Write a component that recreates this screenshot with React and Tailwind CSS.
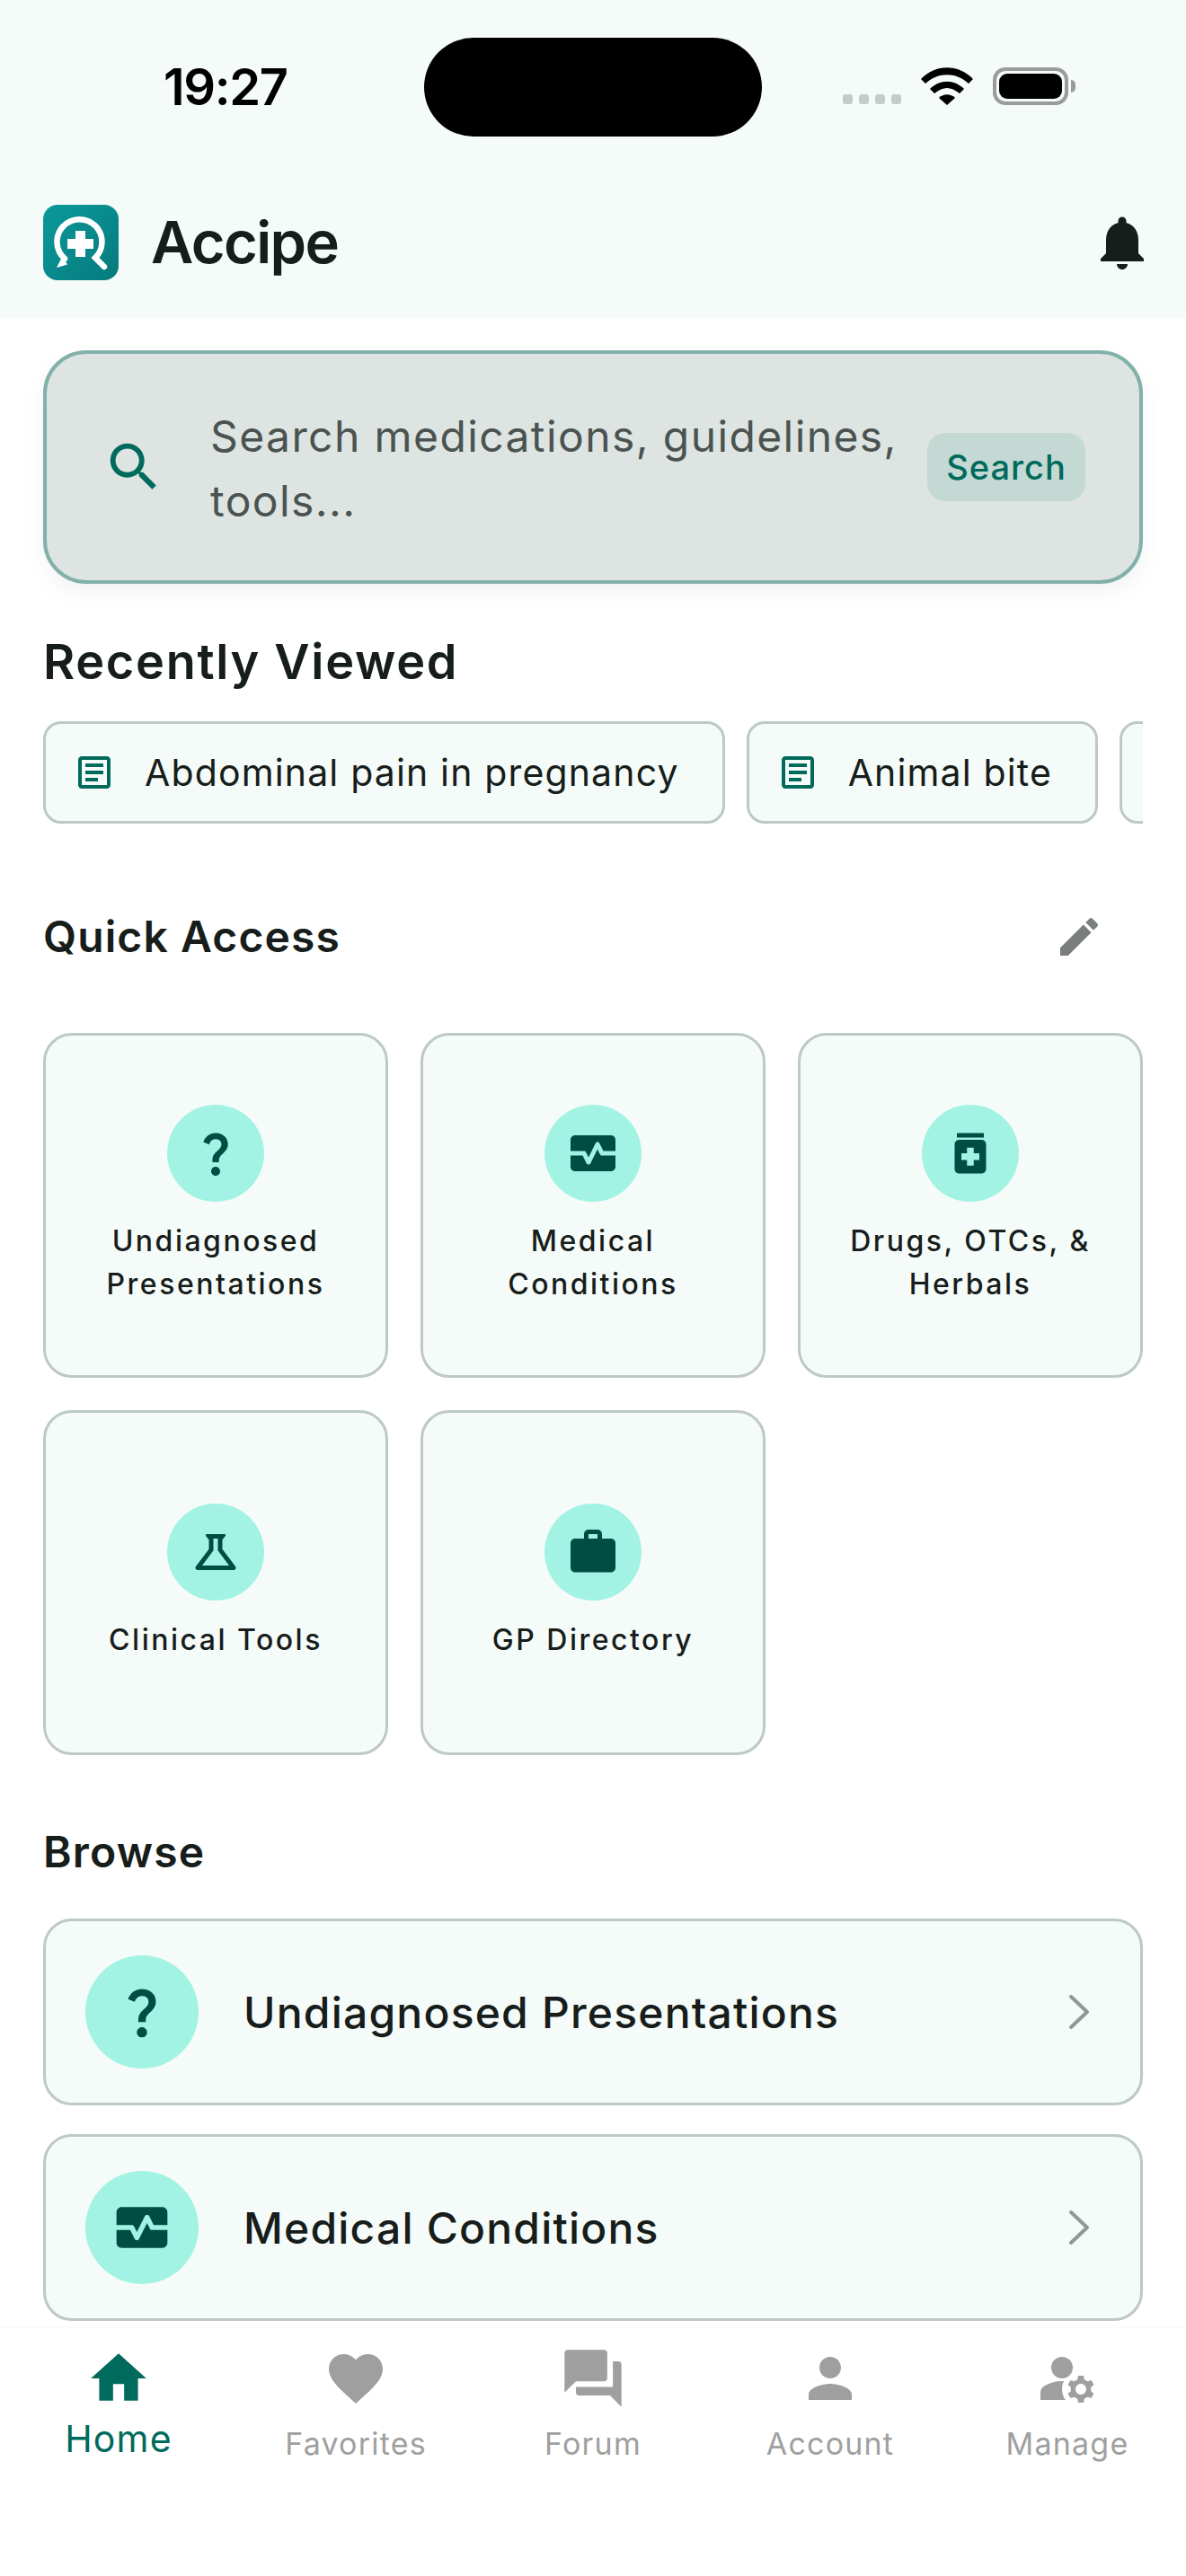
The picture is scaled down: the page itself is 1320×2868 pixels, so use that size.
const sans = "font-['Inter','Noto_Sans',sans-serif]";

const QuestionIcon = ({ className }) => (
  <svg viewBox="0 0 24 24" className={className} fill="currentColor">
    <path d="M11.07 12.85c.77-1.39 2.25-2.21 3.11-3.44.91-1.29.4-3.7-2.18-3.7-1.69 0-2.52 1.28-2.87 2.34L6.54 6.96C7.25 4.83 9.18 3 11.99 3c2.35 0 3.96 1.07 4.78 2.41.7 1.15 1.11 3.3.03 4.9-1.2 1.77-2.35 2.31-2.97 3.45-.25.46-.35.76-.35 2.24h-2.89c-.01-.78-.13-2.05.48-3.15zM14 20c0 1.1-.9 2-2 2s-2-.9-2-2 .9-2 2-2 2 .9 2 2z" />
  </svg>
);

const MonitorHeartIcon = ({ className }) => (
  <svg viewBox="0 0 24 24" className={className} fill="currentColor">
    <path d="M15.11 12.45 14 10.24l-3.11 6.21c-.16.34-.51.55-.89.55s-.73-.21-.89-.55L7.38 13H2v5c0 1.1.9 2 2 2h16c1.1 0 2-.9 2-2v-5h-6c-.38 0-.73-.21-.89-.55z" />
    <path d="M20 4H4c-1.1 0-2 .9-2 2v5h6c.38 0 .73.21.89.55L10 13.76l3.11-6.21c.34-.68 1.45-.68 1.79 0L16.62 11H22V6c0-1.1-.9-2-2-2z" />
  </svg>
);

const MedicationIcon = ({ className }) => (
  <svg viewBox="0 0 24 24" className={className} fill="currentColor">
    <path d="M6 3h12v2H6zm11 3H7c-1.1 0-2 .9-2 2v11c0 1.1.9 2 2 2h10c1.1 0 2-.9 2-2V8c0-1.1-.9-2-2-2zm-1 9h-2.5v2.5h-3V15H8v-3h2.5V9.5h3V12H16v3z" />
  </svg>
);

const ScienceIcon = ({ className }) => (
  <svg viewBox="0 0 24 24" className={className} fill="currentColor">
    <path d="M13 11.33 18 18H6l5-6.67V6h2m2.96-2H8.04c-.42 0-.65.48-.39.81L9 6.5v4.17L3.2 18.4c-.49.66-.02 1.6.8 1.6h16c.82 0 1.29-.94.8-1.6L15 10.67V6.5l1.35-1.69c.26-.33.03-.81-.39-.81z" />
  </svg>
);

const WorkIcon = ({ className }) => (
  <svg viewBox="0 0 24 24" className={className} fill="currentColor">
    <path d="M20 6h-4V4c0-1.11-.89-2-2-2h-4c-1.11 0-2 .89-2 2v2H4c-1.11 0-1.99.89-1.99 2L2 19c0 1.11.89 2 2 2h16c1.11 0 2-.89 2-2V8c0-1.11-.89-2-2-2zm-6 0h-4V4h4v2z" />
  </svg>
);

const ArticleIcon = ({ className }) => (
  <svg viewBox="0 0 24 24" className={className} fill="currentColor">
    <path d="M19 5v14H5V5h14m0-2H5c-1.1 0-2 .9-2 2v14c0 1.1.9 2 2 2h14c1.1 0 2-.9 2-2V5c0-1.1-.9-2-2-2z" />
    <path d="M14 17H7v-2h7v2zm3-4H7v-2h10v2zm0-4H7V7h10v2z" />
  </svg>
);

const Logo = () => (
  <svg viewBox="0 0 84 84" className="w-[84px] h-[84px] shrink-0">
    <defs>
      <linearGradient id="logoFill" x1="0" y1="0" x2="1" y2="1">
        <stop offset="0" stopColor="#0b9a9c" />
        <stop offset="1" stopColor="#067a7c" />
      </linearGradient>
    </defs>
    <rect width="84" height="84" rx="16" fill="url(#logoFill)" />
    <path d="M24 60 A 25 25 0 1 1 58 59 L68 69" fill="none" stroke="#fff" strokeWidth="6.5" strokeLinecap="round" />
    <path d="M15 70 L27 66.5 L21.5 57 Z" fill="#fff" />
    <path d="M36 29h11v9h9v11h-9v9H36v-9h-9V38h9z" fill="#fff" />
  </svg>
);

const StatusBar = () => (
  <div className="flex items-center h-[190px] pt-[4px] relative">
    <span className="ml-[182px] text-[56px] font-semibold text-black leading-none tracking-tight font-['Inter',sans-serif]">19:27</span>
    <div className="absolute left-[472px] top-[42px] w-[376px] h-[110px] bg-black rounded-full" />
    <div className="absolute left-[938px] top-[105px] flex gap-[7px]">
      {[0, 1, 2, 3].map((i) => (
        <div key={i} className="w-[11px] h-[11px] rounded-[3px] bg-[#c4cbc8]" />
      ))}
    </div>
    <svg viewBox="0 0 58 42" className="absolute left-[1025px] top-[75px] w-[58px] h-[42px]" fill="#000">
      <path d="M0 13 C 16 -4 42 -4 58 13 L53 18 C 39 5 19 5 5 18 Z" />
      <path d="M10 24 C 21 13 37 13 48 24 L43 29 C 33 21 25 21 15 29 Z" />
      <path d="M20 34 C 25 29 33 29 38 34 L29 42 Z" />
    </svg>
    <div className="absolute left-[1105px] top-[75px] w-[84px] h-[42px] rounded-[14px] border-[4px] border-[#999c9b] p-[3px]">
      <div className="w-full h-full bg-black rounded-[9px]" />
    </div>
    <div className="absolute left-[1192px] top-[89px] w-[5px] h-[14px] rounded-r-full bg-[#999c9b]" />
  </div>
);

const IconCircle = ({ children, size = "w-[108px] h-[108px]" }) => (
  <div className={`${size} rounded-full bg-[#a2f3e3] flex items-center justify-center shrink-0 text-[#004d43]`}>
    {children}
  </div>
);

const Chip = ({ label }) => (
  <div className="h-[114px] shrink-0 flex items-center gap-[32px] pl-[30px] pr-[48px] rounded-[20px] border-[3px] border-[#bdc9c5] bg-[#f5fbf8]">
    <ArticleIcon className="w-[48px] h-[48px] text-[#006a5d] shrink-0" />
    <span className="pt-[2px] text-[41px] text-[#171d1b] whitespace-nowrap tracking-[1.15px]">{label}</span>
  </div>
);

const QuickCard = ({ icon, label }) => (
  <div className="h-[384px] rounded-[32px] border-[3px] border-[#bdc9c5] bg-[#f5fbf8] flex flex-col items-center justify-center px-[30px]">
    <IconCircle>{icon}</IconCircle>
    <span className="mt-[20px] text-center text-[32px] leading-[48px] font-medium text-[#171d1b] tracking-[2.5px]">{label}</span>
  </div>
);

const BrowseRow = ({ icon, label }) => (
  <div className="h-[208px] rounded-[32px] border-[3px] border-[#bdc9c5] bg-[#f5fbf8] flex items-center pl-[44px] pr-[56px]">
    <IconCircle size="w-[126px] h-[126px]">{icon}</IconCircle>
    <span className="ml-[50px] flex-1 pt-[2px] text-[48px] font-medium text-[#171d1b] tracking-[1.2px]">{label}</span>
    <svg viewBox="0 0 24 40" className="w-[24px] h-[40px] text-[#8d9995]" fill="none" stroke="currentColor" strokeWidth="4" strokeLinecap="round" strokeLinejoin="round">
      <path d="M3 3 L21 20 L3 37" />
    </svg>
  </div>
);

const Tab = ({ icon, label, active }) => (
  <div className={`flex-1 flex flex-col items-center ${active ? "text-[#006a5d]" : "text-[#9f9f9f]"}`}>
    <div className="h-[78px] flex items-center justify-center">{icon}</div>
    <span className={`${active ? "mt-[6px] text-[41px]" : "mt-[12px] text-[34px]"} leading-[44px] tracking-[1.2px]`}>{label}</span>
  </div>
);

export default function App() {
  return (
    <div className={`w-[1320px] h-[2868px] bg-white flex flex-col overflow-hidden ${sans}`}>
      <header className="bg-[#f5fbf8] h-[354px] shrink-0">
        <StatusBar />
        <div className="flex items-center justify-between pl-[48px] pr-[35px] h-[84px] mt-[38px]">
          <div className="flex items-center gap-[36px]">
            <Logo />
            <span className="text-[65px] font-semibold text-[#171d1b] tracking-tight">Accipe</span>
          </div>
          <svg viewBox="0 0 24 24" className="w-[72px] h-[72px] text-[#171d1b]" fill="currentColor">
            <path d="M12 22c1.1 0 2-.9 2-2h-4c0 1.1.9 2 2 2zm6-6v-5c0-3.07-1.63-5.64-4.5-6.32V4c0-.83-.67-1.5-1.5-1.5s-1.5.67-1.5 1.5v.68C7.64 5.36 6 7.92 6 11v5l-2 2v1h16v-1l-2-2z" />
          </svg>
        </div>
      </header>

      <main className="flex-1 min-h-0 overflow-hidden px-[48px] pt-[36px]">
        <div className="h-[260px] rounded-[48px] border-[4px] border-[#82b1a9] bg-[#dee4e1] shadow-[0_10px_24px_rgba(0,0,0,0.05)] flex items-center pl-[62px] pr-[60px]">
          <svg viewBox="0 0 24 24" className="w-[70px] h-[70px] text-[#006a5d] shrink-0" fill="currentColor">
            <path d="M15.5 14h-.79l-.28-.27C15.41 12.59 16 11.11 16 9.5 16 5.91 13.09 3 9.5 3S3 5.91 3 9.5 5.91 16 9.5 16c1.61 0 3.09-.59 4.23-1.57l.27.28v.79l5 4.99L20.49 19l-4.99-5zm-6 0C7.01 14 5 11.99 5 9.5S7.01 5 9.5 5 14 7.01 14 9.5 11.99 14 9.5 14z" />
          </svg>
          <span className="ml-[50px] flex-1 pt-[4px] text-[48px] leading-[72px] text-[#4a5350] tracking-[1.4px]">Search medications, guidelines, tools...</span>
          <div className="ml-[24px] w-[176px] h-[76px] rounded-[20px] bg-[#c4d9d3] flex items-center justify-center text-[38px] font-medium text-[#006a5d] tracking-[1px]">Search</div>
        </div>

        <h2 className="mt-[54px] text-[54px] leading-[66px] font-semibold text-[#171d1b] tracking-[1.7px]">Recently Viewed</h2>

        <div className="mt-[33px] flex gap-[24px] overflow-hidden">
          <Chip label="Abdominal pain in pregnancy" />
          <Chip label="Animal bite" />
          <div className="h-[114px] w-[100px] shrink-0 rounded-[20px] border-[3px] border-[#bdc9c5] bg-[#f5fbf8]" />
        </div>

        <div className="mt-[96px] flex items-center justify-between h-[60px] pr-[43px]">
          <h2 className="text-[48px] font-semibold text-[#171d1b] tracking-[1.1px]">Quick Access</h2>
          <svg viewBox="0 0 24 24" className="w-[56px] h-[56px] text-[#7a7f7d]" fill="currentColor">
            <path d="M3 17.25V21h3.75L17.81 9.94l-3.75-3.75L3 17.25zM20.71 7.04c.39-.39.39-1.02 0-1.41l-2.34-2.34c-.39-.39-1.02-.39-1.41 0l-1.83 1.83 3.75 3.75 1.83-1.83z" />
          </svg>
        </div>

        <div className="mt-[77px] grid grid-cols-3 gap-x-[36px] gap-y-[36px]">
          <QuickCard icon={<QuestionIcon className="w-[60px] h-[60px]" />} label="Undiagnosed Presentations" />
          <QuickCard icon={<MonitorHeartIcon className="w-[60px] h-[60px]" />} label="Medical Conditions" />
          <QuickCard icon={<MedicationIcon className="w-[60px] h-[60px]" />} label="Drugs, OTCs, & Herbals" />
          <QuickCard icon={<ScienceIcon className="w-[60px] h-[60px]" />} label="Clinical Tools" />
          <QuickCard icon={<WorkIcon className="w-[60px] h-[60px]" />} label="GP Directory" />
        </div>

        <h2 className="mt-[78px] text-[48px] leading-[60px] font-semibold text-[#171d1b] tracking-[1.2px]">Browse</h2>

        <div className="mt-[44px] flex flex-col gap-[32px]">
          <BrowseRow icon={<QuestionIcon className="w-[68px] h-[68px]" />} label="Undiagnosed Presentations" />
          <BrowseRow icon={<MonitorHeartIcon className="w-[68px] h-[68px]" />} label="Medical Conditions" />
        </div>
      </main>

      <nav className="h-[278px] shrink-0 bg-white flex pt-[17px] border-t-[2px] border-[#fafafa]">
        <Tab active label="Home" icon={<svg viewBox="0 0 24 24" className="w-[74px] h-[74px]" fill="currentColor"><path d="M10 20v-6h4v6h5v-8h3L12 3 2 12h3v8z" /></svg>} />
        <Tab label="Favorites" icon={<svg viewBox="0 0 24 24" className="w-[72px] h-[72px]" fill="currentColor"><path d="m12 21.35-1.45-1.32C5.4 15.36 2 12.28 2 8.5 2 5.42 4.42 3 7.5 3c1.74 0 3.41.81 4.5 2.09C13.09 3.81 14.76 3 16.5 3 19.58 3 22 5.42 22 8.5c0 3.78-3.4 6.86-8.55 11.54L12 21.35z" /></svg>} />
        <Tab label="Forum" icon={<svg viewBox="0 0 24 24" className="w-[76px] h-[76px]" fill="currentColor"><path d="M21 6h-2v9H6v2c0 .55.45 1 1 1h11l4 4V7c0-.55-.45-1-1-1zm-4 6V3c0-.55-.45-1-1-1H3c-.55 0-1 .45-1 1v14l4-4h10c.55 0 1-.45 1-1z" /></svg>} />
        <Tab label="Account" icon={<svg viewBox="0 0 24 24" className="w-[72px] h-[72px]" fill="currentColor"><path d="M12 12c2.21 0 4-1.79 4-4s-1.79-4-4-4-4 1.79-4 4 1.79 4 4 4zm0 2c-2.67 0-8 1.34-8 4v2h16v-2c0-2.66-5.33-4-8-4z" /></svg>} />
        <Tab label="Manage" icon={<svg viewBox="0 0 24 24" className="w-[72px] h-[72px]" fill="currentColor"><circle cx="10" cy="8" r="4" /><path d="M10.67 13.02C10.45 13.01 10.23 13 10 13c-2.42 0-4.68.67-6.61 1.82C2.51 15.34 2 16.32 2 17.35V20h9.26c-.79-1.13-1.26-2.51-1.26-4 0-1.07.25-2.07.67-2.98zM20.75 16c0-.22-.03-.42-.06-.63l1.14-1.01-1-1.73-1.45.49c-.32-.27-.68-.48-1.08-.63L18 11h-2l-.3 1.49c-.4.15-.76.36-1.08.63l-1.45-.49-1 1.73 1.14 1.01c-.03.21-.06.41-.06.63s.03.42.06.63l-1.14 1.01 1 1.73 1.45-.49c.32.27.68.48 1.08.63L16 21h2l.3-1.49c.4-.15.76-.36 1.08-.63l1.45.49 1-1.73-1.14-1.01c.03-.21.06-.41.06-.63zM17 18c-1.1 0-2-.9-2-2s.9-2 2-2 2 .9 2 2-.9 2-2 2z" /></svg>} />
      </nav>
    </div>
  );
}
